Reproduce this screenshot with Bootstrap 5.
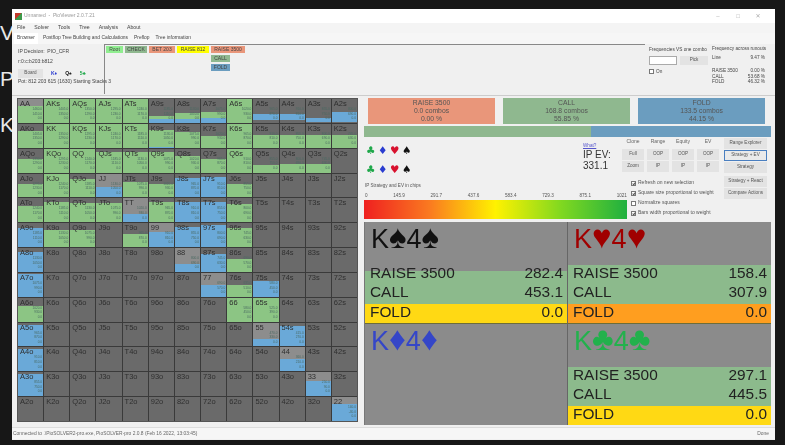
<!DOCTYPE html>
<html lang="en">
<head>
  <meta charset="UTF-8">
  <title>PioViewer</title>
  <link href="https://cdn.jsdelivr.net/npm/bootstrap@5.3.0/dist/css/bootstrap.min.css" rel="stylesheet">
  <style>
    html, body { height: 445px; overflow: hidden; }
    body { background: #171717; font-family: "Liberation Sans", "DejaVu Sans", sans-serif; font-size: 5px; line-height: 1.1; color: #444; }
    .side-strip { width: 12px; height: 445px; padding-top: 21px; color: #e8e8e8; font-size: 21px; line-height: 24px; overflow: hidden; flex: none; }
    .side-strip div { margin-bottom: 22px; }
    .pv-window { width: 763px; height: 431px; margin-top: 9px; background: #f0f0f0; filter: blur(.55px); flex: none; }
    .title-bar { height: 14px; background: #fff; padding: 0 7px 0 3px; color: #999; }
    .app-icon { width: 7px; height: 7px; background: linear-gradient(135deg, #c0392b 50%, #3c9a4a 50%); margin-right: 2px; }
    .win-ctl { width: 20px; text-align: center; color: #aaa; font-size: 6px; }
    .menu-row { height: 10px; padding-left: 5px; gap: 9px; background: #f4f4f4; font-size: 5.2px; }
    .tab-row { height: 11px; border: 0; padding-left: 2px; gap: 4px; background: #f6f6f6; font-size: 4.9px; }
    .tab-item { padding: 2px 1px 0; height: 11px; }
    .tab-item.is-on { background: #fff; padding: 2px 3px 0; }
    .top-pane { height: 50px; }
    .info-pane { width: 93px; padding: 4px 0 0 6px; border-right: 1px solid #888; }
    .info-pane > div { height: 10px; padding-top: 1px; white-space: nowrap; }
    .pv-btn { --bs-btn-padding-x: 0; --bs-btn-padding-y: 0; --bs-btn-font-size: 4.6px; --bs-btn-border-radius: 0; --bs-btn-bg: #e3e3e3; --bs-btn-border-color: #e3e3e3; --bs-btn-color: #555; line-height: 1; }
    .board-btn { width: 25px; height: 9px; }
    .tree-pane { width: 540px; border-top: 1px solid #888; padding: 1px 0 0 1px; gap: 2px; }
    .node { height: 7px; padding: 1px 2px 0; font-size: 5px; text-align: center; color: #444; }
    .tree-col { gap: 2px; }
    .n-root { width: 17px; background: #90ee90; }
    .n-check { width: 22px; background: #8fb88f; }
    .n-salmon { background: #e9967a; }
    .n-bet { width: 26px; }
    .n-raise { width: 32px; background: #ffff00; }
    .n-big { width: 34px; }
    .n-call { width: 19px; background: #8fb88f; }
    .n-fold { width: 19px; background: #6b9dbf; }
    .freq-pane { width: 63px; padding: 3px 0 0 4px; white-space: nowrap; font-size: 4.7px; }
    .pick-box { width: 28px; height: 9px; background: #fff; border: 1px solid #aaa; }
    .pick-btn { width: 28px; height: 9px; margin-left: 3px; }
    .form-check-input.pv-check { width: 5px; height: 5px; margin: 0 2px 0 0; border-radius: 0; border-color: #777; background-color: #fff; flex: none; }
    .form-check-input.pv-check:checked { background-color: #fff; border-color: #777; background-image: none; position: relative; }
    .form-check-input.pv-check:checked::after { content: ""; display: block; width: 2px; height: 3px; margin: 0 0 0 1px; border: solid #555; border-width: 0 1px 1px 0; transform: rotate(40deg); }
    .runout-pane { width: 62px; padding: 2px 5px 0 4px; white-space: nowrap; font-size: 4.7px; }
    .main-pane { height: 331px; border-top: 1px solid #ccc; margin-top: 1px; padding: 2px 5px 0 5px; }
    .hand-grid { width: 341px; height: 324px; display: grid; grid-template-columns: repeat(13, 1fr); grid-template-rows: repeat(13, 1fr); gap: 1px; background: #3a3a3a; border: 1px solid #555; flex: none; }
    .hand-cell { position: relative; background: #6a6a6a; overflow: hidden; }
    .hand-cell.is-pair { background: #8d8d8d; }
    .seg-gray { background: transparent; }
    .seg-green { background: #8cc584; }
    .seg-blue { background: #6aa9d8; }
    .hand-label { position: absolute; top: 1px; left: 2px; font-size: 7.5px; color: #2f2f2f; }
    .hand-nums { position: absolute; top: 8px; right: 1px; font-size: 3.2px; line-height: 4.6px; text-align: right; color: #4a6a62; }
    .right-pane { width: 407px; margin-left: 6px; flex: none; }
    .action-row { height: 27px; padding: 0 4px; gap: 8px; }
    .action-box { width: 127px; height: 26px; text-align: center; font-size: 6.8px; line-height: 8.2px; color: #555; padding-top: 1px; }
    .action-box.is-raise { background: #e9967a; }
    .action-box.is-call { background: #8fb88f; }
    .action-box.is-fold { background: #6b9dbf; }
    .strat-bar { height: 11px; margin-top: 1px; }
    .bar-call { width: 227px; background: #8fb88f; }
    .bar-fold { flex-grow: 1; background: #6b9dbf; }
    .ctrl-pane { height: 85px; }
    .ctrl-left { width: 263px; flex: none; }
    .ctrl-top { height: 55px; }
    .suit-pane { width: 219px; }
    .suit-row { height: 19px; gap: 3px; padding-left: 2px; font-family: "DejaVu Sans", sans-serif; font-size: 10.5px; line-height: 19px; }
    .suit-row span { width: 9px; text-align: center; }
    .c-black { color: #111; } .c-red { color: #d8112e; } .c-blue { color: #2a3cd0; } .c-green { color: #1fa84a; }
    .ev-pane { width: 39px; padding-top: 6px; }
    .what-link { font-size: 4.6px; color: #5555cc; }
    .ev-text { font-size: 10px; line-height: 11.5px; color: #333; }
    .clone-grid { width: 102px; margin-left: -5px; flex: none; }
    .clone-col { width: 22px; margin-right: 3px; text-align: center; color: #666; }
    .clone-col .pv-btn { width: 22px; height: 11px; margin-top: 1px; }
    .clone-col div { height: 11px; padding-top: 2px; }
    .check-list { margin-top: 6px; }
    .check-line { height: 10px; padding-left: 9px; color: #555; white-space: nowrap; }
    .side-btns { width: 43px; padding-top: 1px; }
    .side-btns .pv-btn { width: 43px; height: 11px; margin-bottom: 1px; display: block; }
    .side-btns .is-focus { --bs-btn-border-color: #4a7fc0; --bs-btn-bg: #eaeaea; }
    .side-btns .gap-under { margin-bottom: 3px; }
    .chips-title { margin: 0; padding-left: 1px; height: 8px; color: #555; font-size: 4.6px; }
    .scale-row { width: 263px; height: 8px; color: #555; font-size: 4.6px; padding: 1px 0 0 1px; }
    .heat-bar { width: 263px; height: 19px; background: linear-gradient(90deg, #ef2020 0%, #fa7a20 25%, #fff200 50%, #80d820 75%, #1fb040 100%); }
    .combo-grid { height: 203px; margin-top: 0; display: grid; grid-template-columns: 1fr 1fr; grid-template-rows: 102px 101px; background: #8b8b8b; border-left: 1px solid #777; }
    .combo-box { display: flex; flex-direction: column; overflow: hidden; }
    .combo-box:nth-child(odd) { border-right: 1px solid #666; }
    .combo-box:nth-child(-n+2) { border-bottom: 1px solid #6d6d3a; }
    .combo-name { font-size: 27px; line-height: 28px; padding: 3px 0 0 6px; }
    .combo-name b { font-family: "Liberation Sans", sans-serif; font-weight: 400; font-size: 33px; line-height: 0; }
    .combo-rows { margin-top: auto; font-size: 15.4px; line-height: 16.4px; color: #222; }
    .combo-line { padding: 0 4px 3px 5px; }
    .combo-half { background: linear-gradient(#8b8b8b 6px, #8cba8c 6px); }
    .combo-green { background: #8cba8c; }
    .combo-yellow { background: #ffd914; }
    .combo-orange { background: #ff9e1f; }
    .status-bar { height: 12px; padding: 3px 6px 0 1px; border-top: 1px solid #ddd; background: #f6f6f6; color: #666; font-size: 4.9px; margin-top: 1px; }
  </style>
</head>
<body class="d-flex">
  <div class="side-strip">
    <div>V</div>
    <div>P</div>
    <div>K</div>
  </div>

  <div class="pv-window d-flex flex-column">
    <div class="title-bar d-flex align-items-center">
      <span class="app-icon"></span>
      <span>Unnamed &nbsp;-&nbsp; PioViewer 2.0.7.21</span>
      <span class="ms-auto win-ctl">&#8211;</span>
      <span class="win-ctl">&#9633;</span>
      <span class="win-ctl">&#10005;</span>
    </div>
    <div class="menu-row d-flex align-items-center">
      <span>File</span><span>Solver</span><span>Tools</span><span>Tree</span><span>Analysis</span><span>About</span>
    </div>
    <ul class="nav tab-row">
      <li class="tab-item is-on">Browser</li>
      <li class="tab-item">Postflop Tree Building and Calculations</li>
      <li class="tab-item">Preflop</li>
      <li class="tab-item">Tree information</li>
    </ul>

    <div class="top-pane d-flex">
      <div class="info-pane">
        <div>IP Decision: &nbsp;PIO_CFR</div>
        <div>r:0:c:b203:b812</div>
        <div class="d-flex align-items-center gap-2">
          <button class="btn pv-btn board-btn">Board</button>
          <b class="c-blue">K&#9830;</b><b class="c-black">Q&#9824;</b><b class="c-green">5&#9827;</b>
        </div>
        <div>Pot: 812 203 615 (1630) Starting Stacks 3</div>
      </div>
      <div class="tree-pane d-flex">
        <div class="node n-root">Root</div>
        <div class="node n-check">CHECK</div>
        <div class="node n-salmon n-bet">BET 203</div>
        <div class="node n-raise">RAISE 812</div>
        <div class="tree-col d-flex flex-column">
          <div class="node n-salmon n-big">RAISE 3500</div>
          <div class="node n-call">CALL</div>
          <div class="node n-fold">FOLD</div>
        </div>
      </div>
      <div class="freq-pane">
        <div>Frequencies VS one combo</div>
        <div class="d-flex mt-1">
          <div class="pick-box"></div>
          <button class="btn pv-btn pick-btn">Pick</button>
        </div>
        <div class="d-flex align-items-center mt-1">
          <input class="form-check-input pv-check" type="checkbox"><span>On</span>
        </div>
      </div>
      <div class="runout-pane">
        <div>Frequency across runouts</div>
        <div class="d-flex justify-content-between mt-1"><span>Line</span><span>9.47 %</span></div>
        <div class="d-flex justify-content-between mt-2"><span>RAISE 3500</span><span>0.00 %</span></div>
        <div class="d-flex justify-content-between"><span>CALL</span><span>53.68 %</span></div>
        <div class="d-flex justify-content-between"><span>FOLD</span><span>46.32 %</span></div>
      </div>
    </div>

    <div class="main-pane d-flex">
      <div class="hand-grid" id="handGrid"></div>

      <div class="right-pane">
        <div class="action-row d-flex">
          <div class="action-box is-raise">RAISE 3500<br>0.0 combos<br>0.00 %</div>
          <div class="action-box is-call">CALL<br>168.8 combos<br>55.85 %</div>
          <div class="action-box is-fold">FOLD<br>133.5 combos<br>44.15 %</div>
        </div>
        <div class="strat-bar d-flex"><div class="bar-call"></div><div class="bar-fold"></div></div>

        <div class="ctrl-pane d-flex">
          <div class="ctrl-left">
            <div class="ctrl-top d-flex">
              <div class="suit-pane">
                <div class="suit-row d-flex mt-1"><span class="c-green">&#9827;</span><span class="c-blue">&#9830;</span><span class="c-red">&#9829;</span><span class="c-black">&#9824;</span></div>
                <div class="suit-row d-flex"><span class="c-green">&#9827;</span><span class="c-blue">&#9830;</span><span class="c-red">&#9829;</span><span class="c-black">&#9824;</span></div>
                <p class="chips-title mt-1">IP Strategy and EV in chips</p>
              </div>
              <div class="ev-pane">
                <a class="what-link" href="#">What?</a>
                <div class="ev-text">IP EV:<br>331.1</div>
              </div>
            </div>
            <div class="scale-row d-flex justify-content-between">
              <span>0</span><span>145.9</span><span>291.7</span><span>437.6</span><span>583.4</span><span>729.3</span><span>875.1</span><span>1021</span>
            </div>
            <div class="heat-bar"></div>
          </div>
          <div class="clone-grid">
            <div class="d-flex">
              <div class="clone-col"><div>Clone</div><button class="btn pv-btn">Full</button><button class="btn pv-btn">Zoom</button></div>
              <div class="clone-col"><div>Range</div><button class="btn pv-btn">OOP</button><button class="btn pv-btn">IP</button></div>
              <div class="clone-col"><div>Equity</div><button class="btn pv-btn">OOP</button><button class="btn pv-btn">IP</button></div>
              <div class="clone-col"><div>EV</div><button class="btn pv-btn">OOP</button><button class="btn pv-btn">IP</button></div>
            </div>
            <div class="check-list">
              <div class="check-line d-flex align-items-center"><input class="form-check-input pv-check" type="checkbox" checked><span>Refresh on new selection</span></div>
              <div class="check-line d-flex align-items-center"><input class="form-check-input pv-check" type="checkbox" checked><span>Square size proportional to weight</span></div>
              <div class="check-line d-flex align-items-center"><input class="form-check-input pv-check" type="checkbox"><span>Normalize squares</span></div>
              <div class="check-line d-flex align-items-center"><input class="form-check-input pv-check" type="checkbox" checked><span>Bars width proportional to weight</span></div>
            </div>
          </div>
          <div class="side-btns">
            <button class="btn pv-btn">Range Explorer</button>
            <button class="btn pv-btn is-focus">Strategy + EV</button>
            <button class="btn pv-btn gap-under">Strategy</button>
            <button class="btn pv-btn">Strategy + React</button>
            <button class="btn pv-btn">Compare Actions</button>
          </div>
        </div>

        <div class="combo-grid">
          <div class="combo-box">
            <div class="combo-name c-black">K<b>&#9824;</b>4<b>&#9824;</b></div>
            <div class="combo-rows">
              <div class="d-flex justify-content-between combo-line combo-half"><span>RAISE 3500</span><span>282.4</span></div>
              <div class="d-flex justify-content-between combo-line combo-green"><span>CALL</span><span>453.1</span></div>
              <div class="d-flex justify-content-between combo-line combo-yellow"><span>FOLD</span><span>0.0</span></div>
            </div>
          </div>
          <div class="combo-box">
            <div class="combo-name" style="color:#a00000">K<b>&#9829;</b>4<b>&#9829;</b></div>
            <div class="combo-rows">
              <div class="d-flex justify-content-between combo-line combo-green"><span>RAISE 3500</span><span>158.4</span></div>
              <div class="d-flex justify-content-between combo-line combo-green"><span>CALL</span><span>307.9</span></div>
              <div class="d-flex justify-content-between combo-line combo-orange"><span>FOLD</span><span>0.0</span></div>
            </div>
          </div>
          <div class="combo-box">
            <div class="combo-name" style="color:#3546c8">K<b>&#9830;</b>4<b>&#9830;</b></div>
          </div>
          <div class="combo-box">
            <div class="combo-name" style="color:#22b14c">K<b>&#9827;</b>4<b>&#9827;</b></div>
            <div class="combo-rows">
              <div class="d-flex justify-content-between combo-line combo-green"><span>RAISE 3500</span><span>297.1</span></div>
              <div class="d-flex justify-content-between combo-line combo-green"><span>CALL</span><span>445.5</span></div>
              <div class="d-flex justify-content-between combo-line combo-yellow"><span>FOLD</span><span>0.0</span></div>
            </div>
          </div>
        </div>
      </div>
    </div>

    <div class="status-bar d-flex justify-content-between">
      <span>Connected to .\PioSOLVER2-pro.exe, PioSOLVER-pro 2.0.8 (Feb 16 2022, 13:03:45)</span>
      <span>Done</span>
    </div>
  </div>

  <script src="https://cdn.jsdelivr.net/npm/bootstrap@5.3.0/dist/js/bootstrap.bundle.min.js"></script>
  <script>
    const ranks = 'AKQJT98765432'.split('');
    const G = [100, 0, 0];
    // gray / green / blue share of each square, top to bottom
    const rows = [
      [[30,70,0],[0,100,0],[0,100,0],[0,100,0],[0,100,0],[70,15,15],[60,25,15],[55,25,20],[0,100,0],[62,0,28],[62,0,28],[78,0,18],[55,0,40]],
      [[30,70,0],[0,100,0],[0,100,0],[0,100,0],[0,100,0],[25,72,3],[35,65,0],[50,50,0],[0,100,0],[45,55,0],[45,55,0],[45,55,0],[45,55,0]],
      [[45,55,0],[0,100,0],[0,100,0],[15,85,0],[15,85,0],[15,85,0],[30,70,0],[45,55,0],[0,100,0],[70,30,0],[65,35,0],[65,35,0],G],
      [[45,55,0],[0,100,0],[25,75,0],[55,0,45],[35,65,0],[45,55,0],[20,0,80],[15,0,85],[45,55,0],G,G,G,G],
      [[30,70,0],[15,85,0],[20,80,0],[20,80,0],[65,0,35],[15,85,0],[15,0,85],[15,0,85],[25,75,0],G,G,G,G],
      [[20,0,80],[30,70,0],[30,70,0],G,[45,55,0],[35,0,65],[15,0,85],[8,0,92],[20,80,0],G,G,G,G],
      [[15,0,85],G,G,G,G,G,[65,0,35],[25,0,75],[45,55,0],G,G,G,G],
      [[5,0,95],G,G,G,G,G,G,[50,0,50],[50,50,0],[35,0,65],G,G,G],
      [[35,65,0],G,G,G,G,G,G,G,[0,100,0],[0,100,0],G,G,G],
      [[8,0,92],G,G,G,G,G,G,G,G,[70,0,30],[15,0,85],G,G],
      [[5,0,95],G,G,G,G,G,G,G,G,G,[50,0,50],G,G],
      [[8,0,92],G,G,G,G,G,G,G,G,G,G,[35,0,65],G],
      [G,G,G,G,G,G,G,G,G,G,G,G,[30,0,70]]
    ];

    const gridEl = document.getElementById('handGrid');
    rows.forEach(function (row, i) {
      row.forEach(function (shares, j) {
        let name = ranks[i] + ranks[j];
        if (j > i) name = ranks[i] + ranks[j] + 's';
        if (j < i) name = ranks[j] + ranks[i] + 'o';

        const cell = document.createElement('div');
        cell.className = 'hand-cell d-flex flex-column' + (i === j ? ' is-pair' : '');
        cell.innerHTML =
          `<div class="seg-gray" style="height:${shares[0]}%"></div>` +
          `<div class="seg-green" style="height:${shares[1]}%"></div>` +
          `<div class="seg-blue" style="height:${shares[2]}%"></div>` +
          `<span class="hand-label">${name}</span>`;

        if (shares[0] < 100) {
          const a = (1460 - (i + j) * 55).toFixed(1);
          const b = (1410 - (i + j) * 60).toFixed(1);
          cell.innerHTML += `<span class="hand-nums">${a}<br>${b}<br>0.0</span>`;
        }
        gridEl.appendChild(cell);
      });
    });
  </script>
</body>
</html>
